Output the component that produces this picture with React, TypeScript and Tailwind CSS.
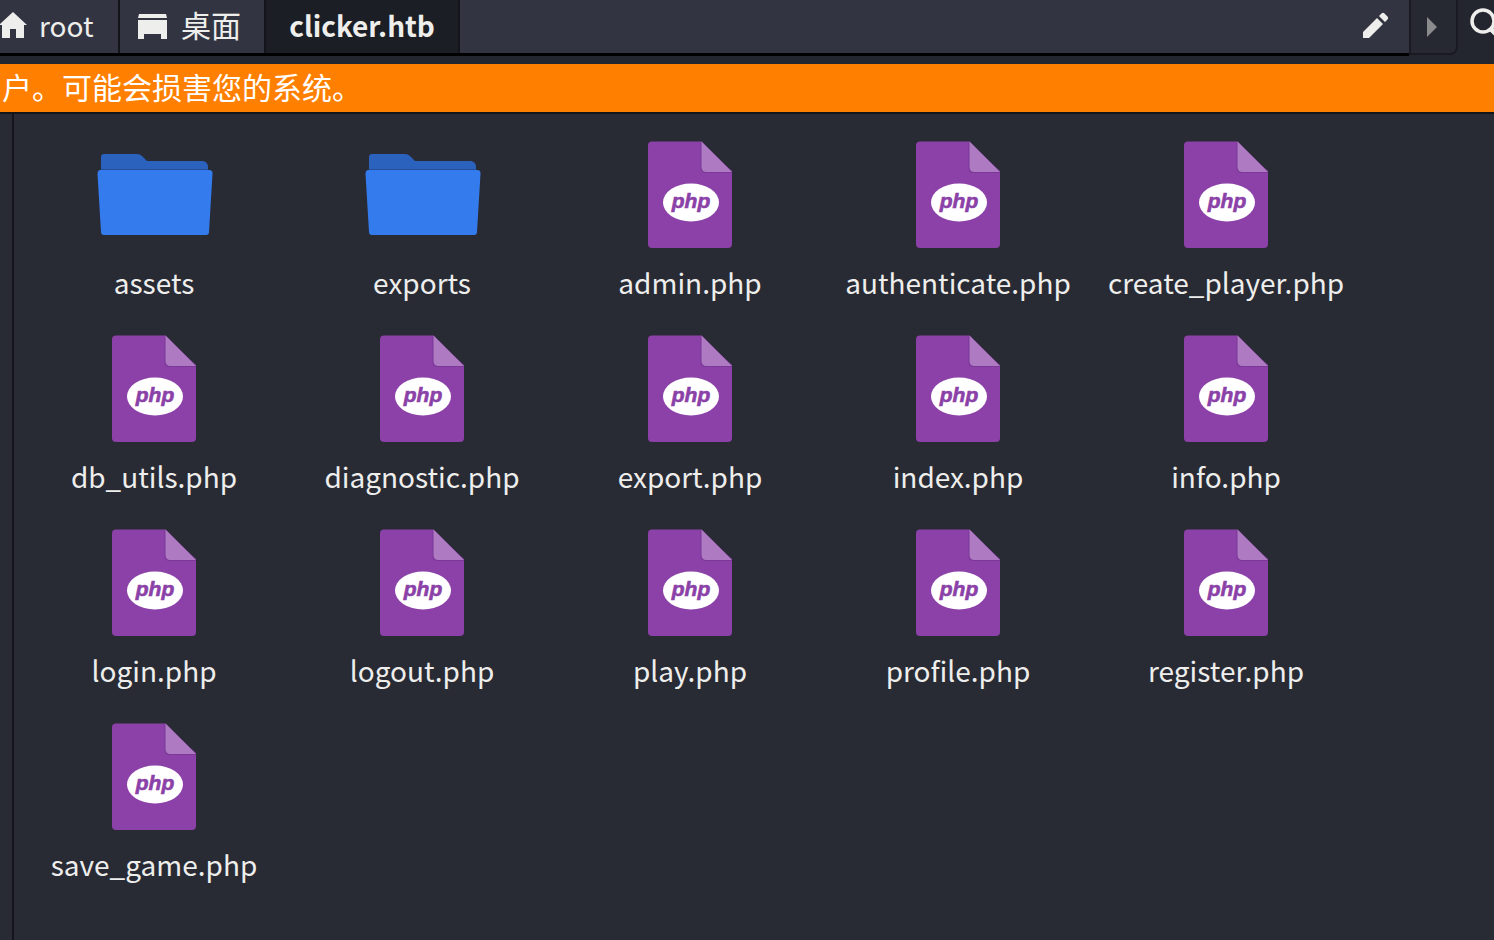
import React from "react";

const entries = [
  "assets", "exports", "admin.php", "authenticate.php", "create_player.php",
  "db_utils.php", "diagnostic.php", "export.php", "index.php", "info.php",
  "login.php", "logout.php", "play.php", "profile.php", "register.php",
  "save_game.php",
];

function FolderIcon() {
  return (
    <svg width="118" height="82" viewBox="-2 0 118 82" aria-hidden="true">
      <path d="M4 3Q4 0 7 0H40Q43 0 45 2L50 7H106Q111 8 111 13V30H4Z" fill="#2a62be" />
      <path d="M4 15H111V17H4Z" fill="#244f98" />
      <path d="M3.500 16H112Q116 16 115.500 20L112 78Q112 81 109 81H7Q4 81 4 78L.5 20Q.5 16 3.500 16Z" fill="#347bee" />
    </svg>
  );
}

function PhpIcon() {
  return (
    <svg width="84" height="108" viewBox="0 0 84 108" aria-hidden="true">
      <path d="M4 .5H53.500L84 31V103Q84 107 80 107H4Q0 107 0 103V4.500Q0 .5 4 .5Z" fill="#8b41a8" />
      <path d="M52.500 1V27Q52.500 32 58 32H84V30Z" fill="#7b3896" />
      <path d="M53.500 .5L84 31H58.500Q53.500 31 53.500 26Z" fill="#ae7bc3" />
      <ellipse cx="43" cy="61.500" rx="28" ry="19" fill="#fff" />
      <text x="43" y="67" textAnchor="middle" className="font-['Liberation_Sans',sans-serif] text-[21px] font-bold italic" fill="#8b41a8" stroke="#8b41a8" strokeWidth="0.6">php</text>
    </svg>
  );
}

export default function App() {
  return (
    <div className="flex min-h-screen flex-col overflow-hidden bg-[#282a34] font-['Noto_Sans_CJK_SC',sans-serif] text-[28px] text-[#eeeeec]">
      <header className="flex h-16 items-start overflow-hidden bg-[#23252f]">
        <nav aria-label="路径" className="flex h-14 min-w-0 flex-1 border-b-3 border-black bg-[#323541]">
          <button className="flex w-[120px] shrink-0 items-center gap-3 border-r-2 border-[#14151a] pb-1">
            <svg width="27" height="26" viewBox="0 0 27 26" fill="#eeeeec" aria-hidden="true">
              <path d="M13 0L27 13H24V26H16V17H10V26H2V13H-1Z" />
            </svg>
            root
          </button>
          <button className="flex w-[146px] shrink-0 items-center gap-[14px] border-r-2 border-[#14151a] pb-1 pl-[18px]">
            <svg width="29" height="29" viewBox="0 -4 29 29" fill="#eeeeec" aria-hidden="true">
              <path d="M1 0H28L29 4H0ZM0 6H29V25H23V20H6V25H0Z" />
            </svg>
            <span className="text-[30px]">桌面</span>
          </button>
          <button aria-current="page" className="w-[194px] shrink-0 border-r-2 border-[#14151a] bg-[#1c1e25] pb-1 font-bold">clicker.htb</button>
          <button aria-label="编辑路径" className="mr-5 ml-auto pb-1">
            <svg width="26" height="26" viewBox="0 0 26 26" fill="#eeeeec" aria-hidden="true">
              <path d="M0 20L14 6L20 12L6 26H0ZM16 4L18.500 1.500Q20 0 21.500 1.500L24.500 4.500Q26 6 24.500 7.500L22 10Z" />
            </svg>
          </button>
        </nav>
        <button aria-label="下一个" className="flex h-[55px] w-[49px] shrink-0 items-center justify-center rounded-br-lg border-r-2 border-b-2 border-l-2 border-[#1a1b22] bg-[#262832] pr-1">
          <svg width="10" height="20" viewBox="0 0 10 20" fill="#8a8b8c" aria-hidden="true"><path d="M0 0L10 10L0 20Z" /></svg>
        </button>
        <button aria-label="搜索" className="w-9 shrink-0 overflow-hidden pt-2 pl-3">
          <svg className="max-w-none" width="34" height="34" viewBox="0 0 34 34" fill="none" stroke="#eeeeec" aria-hidden="true">
            <circle cx="13" cy="13" r="11" strokeWidth="3.500" /><path d="M21 21L32 32" strokeWidth="5" />
          </svg>
        </button>
      </header>
      <div role="alert" className="h-[50px] overflow-hidden border-b-2 border-[#141519] bg-[#ff7f00] pl-[2px] text-[30px] leading-[44px] whitespace-nowrap text-white">户。可能会损害您的系统。</div>
      <div className="flex flex-1">
        <aside className="w-[14px] shrink-0 border-r-2 border-[#14151a]" />
        <main className="flex-1 pt-6 pl-[6px]">
          <ul className="flex flex-wrap">
            {entries.map((name) => (
              <li key={name} className="h-[194px] w-[268px]">
                <button className="flex w-full flex-col items-center">
                  <span className="flex h-[114px] items-center">{name.endsWith(".php") ? <PhpIcon /> : <FolderIcon />}</span>
                  <span className="mt-[10px] leading-10">{name}</span>
                </button>
              </li>
            ))}
          </ul>
        </main>
      </div>
    </div>
  );
}
